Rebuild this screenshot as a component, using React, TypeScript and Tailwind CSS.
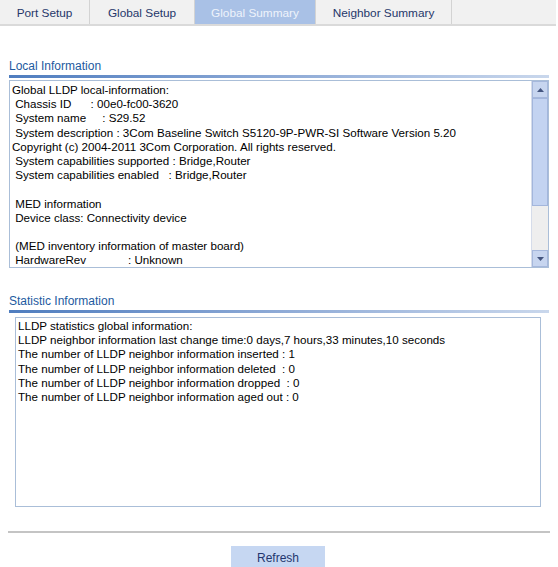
import React from 'react';

const tabs = [
  { label: 'Port Setup', w: 'w-[90px]' },
  { label: 'Global Setup', w: 'w-[105px]' },
  { label: 'Global Summary', w: 'w-[121px]', active: true },
  { label: 'Neighbor Summary', w: 'w-[136px]' },
];

const localLines = [
  'Global LLDP local-information:',
  ' Chassis ID      : 00e0-fc00-3620',
  ' System name     : S29.52',
  ' System description : 3Com Baseline Switch S5120-9P-PWR-SI Software Version 5.20',
  'Copyright (c) 2004-2011 3Com Corporation. All rights reserved.',
  ' System capabilities supported : Bridge,Router',
  ' System capabilities enabled   : Bridge,Router',
  '',
  ' MED information',
  ' Device class: Connectivity device',
  '',
  ' (MED inventory information of master board)',
  ' HardwareRev             : Unknown',
];

const statLines = [
  'LLDP statistics global information:',
  'LLDP neighbor information last change time:0 days,7 hours,33 minutes,10 seconds',
  'The number of LLDP neighbor information inserted : 1',
  'The number of LLDP neighbor information deleted  : 0',
  'The number of LLDP neighbor information dropped  : 0',
  'The number of LLDP neighbor information aged out : 0',
];

const SectionTitle = ({ title }: { title: string }) => (
  <div className="mx-[9px]">
    <div className="text-[12px] leading-[14px] text-[#1d5aa0]">{title}</div>
    <div className="mt-[2px] h-[3px] bg-gradient-to-r from-[#4f7dbf] via-[#8eaad6] to-[#c9d7ec]" />
  </div>
);

const App = () => {
  return (
    <div className="w-[558px] h-[567px] overflow-hidden bg-white font-['Liberation_Sans',Arial,sans-serif]">
      {/* tab strip */}
      <div className="flex h-[26px] w-[556px] bg-[#f1f1f1] border-b-2 border-[#dadada]">
        {tabs.map((t) => (
          <div
            key={t.label}
            className={`${t.w} flex items-center justify-center pt-[3px] text-[11.8px] border-r border-[#d3d3d3] ${
              t.active ? 'bg-[#a9c1e6] text-[#eef3fb]' : 'text-[#26376a]'
            }`}
          >
            {t.label}
          </div>
        ))}
        <div className="flex-1" />
      </div>

      <div className="mt-[33px]">
        <SectionTitle title="Local Information" />
        <div className="mx-[9px] mt-[2px] h-[188px] flex border border-[#aabed8]">
          <div className="flex-1 pl-[2px] pt-[2px] text-[11.6px] leading-[14.2px] text-black whitespace-pre overflow-hidden">
            {localLines.map((l, i) => (
              <div key={i} className="h-[14.2px]">{l}</div>
            ))}
          </div>
          <div className="w-[17px] flex flex-col bg-[#eeeeee] border-l border-[#d5dcea]">
            <div className="h-[17px] bg-[#c7d5ef] border border-[#a6b8dc] flex items-center justify-center">
              <svg width="7" height="4" viewBox="0 0 7 4"><path d="M0 4 L3.5 0 L7 4 Z" fill="#44557f" /></svg>
            </div>
            <div className="h-[108px] bg-[#c3d3f1] border border-[#a3b6dc]" />
            <div className="flex-1" />
            <div className="h-[17px] bg-[#c7d5ef] border border-[#a6b8dc] flex items-center justify-center">
              <svg width="7" height="4" viewBox="0 0 7 4"><path d="M0 0 L7 0 L3.5 4 Z" fill="#44557f" /></svg>
            </div>
          </div>
        </div>
      </div>

      <div className="mt-[26px]">
        <SectionTitle title="Statistic Information" />
        <div className="ml-[15px] mr-[17px] mt-[4px] h-[190px] border border-[#aabed8] pl-[2px] pt-[1px] text-[11.6px] leading-[14.2px] text-black whitespace-pre">
          {statLines.map((l, i) => (
            <div key={i} className="h-[14.2px]">{l}</div>
          ))}
        </div>
      </div>

      <div className="mx-[8px] mt-[24px] h-[2px] bg-[#c4c4c4]" />

      <div className="flex justify-center mt-[13px] pr-[2px]">
        <button className="w-[94px] h-[24px] bg-[#c6d7f2] text-[12px] text-[#23366e]">Refresh</button>
      </div>
    </div>
  );
};

export default App;
